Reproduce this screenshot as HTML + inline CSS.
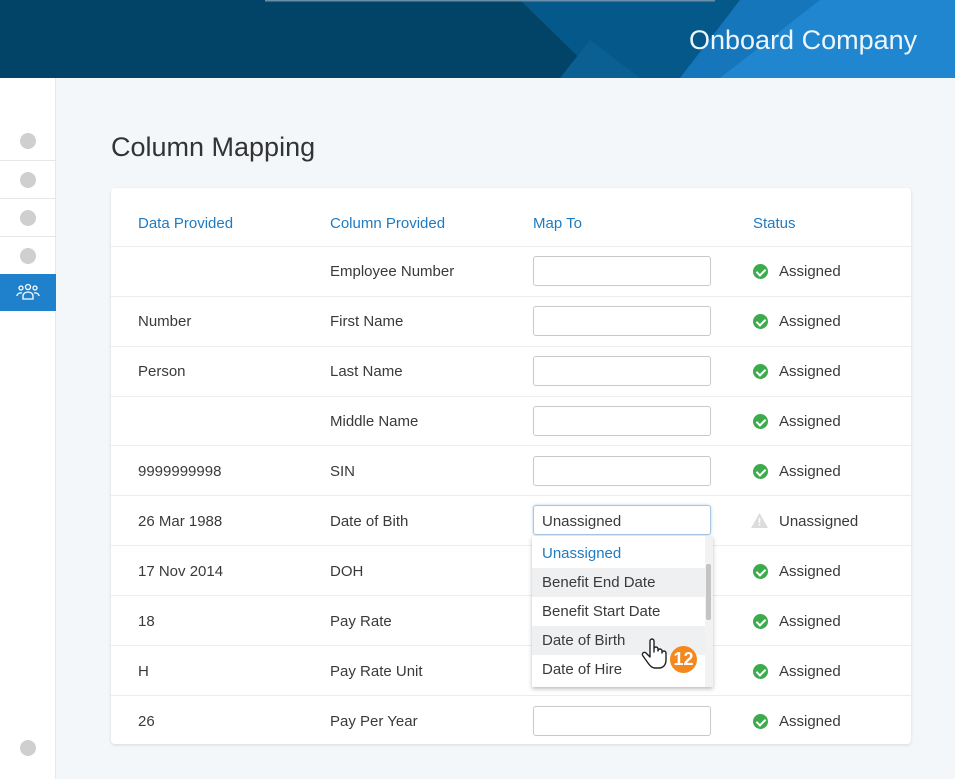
<!DOCTYPE html>
<html><head><style>
*{margin:0;padding:0;box-sizing:border-box}
body{width:955px;height:779px;overflow:hidden;background:#f4f7fa;font-family:"Liberation Sans",sans-serif;position:relative;color:#3a3a3a}
.hdr{position:absolute;left:0;top:0;width:955px;height:78px;background:#024468;overflow:hidden}
.side{position:absolute;left:0;top:78px;width:56px;height:701px;background:#fff;border-right:1px solid #e6e9ec}
.dot{position:absolute;left:20px;width:16px;height:16px;border-radius:50%;background:#cfcfcf}
.sl{position:absolute;left:0;width:56px;height:1px;background:#e6e6e6}
.card{position:absolute;left:111px;top:188px;width:800px;height:556px;background:#fff;border-radius:4px;box-shadow:0 1px 3px rgba(0,0,0,.12)}
.t{position:absolute;font-size:15px;white-space:nowrap}
.h{color:#1f7bc1}
.row{position:absolute;left:111px;width:800px;height:1px;background:#ececec}
.inp{position:absolute;left:533px;width:178px;height:30px;border:1px solid #c9c9c9;border-radius:3px;background:#fff}
.ok{position:absolute;left:753px;width:15px;height:15px;border-radius:50%;background:#3cab4c}
.ok:after{content:"";position:absolute;left:5px;top:3px;width:4px;height:7px;border:solid #fff;border-width:0 2px 2px 0;transform:rotate(45deg)}
.dd{position:absolute;left:532px;top:536px;width:181px;height:151px;background:#fff;box-shadow:0 2px 4px rgba(0,0,0,.25)}
.it{position:absolute;left:0;width:173px;height:29px;padding-left:10px;line-height:29px;font-size:15px}
</style></head><body>
<div class="hdr">
<svg width="955" height="78" style="position:absolute;left:0;top:0">
<polygon points="520,0 955,0 955,78 600,78" fill="#05598a"/>
<polygon points="740,0 955,0 955,78 680,78" fill="#1676bb"/>
<polygon points="820,0 955,0 955,78 720,78" fill="#1f86cf"/>
<polygon points="590,40 640,78 560,78" fill="#0a5f93"/>
<rect x="265" y="0" width="450" height="1.5" fill="#6a8ea8"/>
</svg>
<div class="t" style="left:689px;top:25px;font-size:27px;color:#eef5fb">Onboard Company</div>
</div>
<div class="side">
<div class="dot" style="top:55px"></div><div class="sl" style="top:82px"></div>
<div class="dot" style="top:94px"></div><div class="sl" style="top:120px"></div>
<div class="dot" style="top:132px"></div><div class="sl" style="top:158px"></div>
<div class="dot" style="top:170px"></div><div class="sl" style="top:196px"></div>
<div style="position:absolute;left:0;top:196px;width:56px;height:37px;background:#1f80cc">
<svg width="24" height="18" viewBox="0 0 24 18" style="position:absolute;left:16px;top:9px" fill="none" stroke="#fff" stroke-width="1.3"><circle cx="12" cy="4" r="2.5"/><circle cx="5" cy="5" r="2"/><circle cx="19" cy="5" r="2"/><path d="M7 16v-3a5 4 0 0 1 10 0v3zM1 13a4 3 0 0 1 5-3M23 13a4 3 0 0 0-5-3"/></svg></div>
<div class="dot" style="top:662px"></div>
</div>
<div class="t" style="left:111px;top:132px;font-size:27px;color:#333">Column Mapping</div>
<div class="card"></div>
<div class="t h" style="left:138px;top:215px">Data Provided</div>
<div class="t h" style="left:330px;top:215px">Column Provided</div>
<div class="t h" style="left:533px;top:215px">Map To</div>
<div class="t h" style="left:753px;top:215px">Status</div>
<div class="row" style="top:246px"></div><div class="row" style="top:296px"></div><div class="row" style="top:346px"></div><div class="row" style="top:396px"></div><div class="row" style="top:445px"></div><div class="row" style="top:495px"></div><div class="row" style="top:545px"></div><div class="row" style="top:595px"></div><div class="row" style="top:645px"></div><div class="row" style="top:695px"></div>

<div class="t" style="left:330px;top:263px">Employee Number</div><div class="inp" style="top:256px"></div><div class="ok" style="top:264px"></div><div class="t" style="left:779px;top:263px">Assigned</div>
<div class="t" style="left:138px;top:313px">Number</div><div class="t" style="left:330px;top:313px">First Name</div><div class="inp" style="top:306px"></div><div class="ok" style="top:314px"></div><div class="t" style="left:779px;top:313px">Assigned</div>
<div class="t" style="left:138px;top:363px">Person</div><div class="t" style="left:330px;top:363px">Last Name</div><div class="inp" style="top:356px"></div><div class="ok" style="top:364px"></div><div class="t" style="left:779px;top:363px">Assigned</div>
<div class="t" style="left:330px;top:413px">Middle Name</div><div class="inp" style="top:406px"></div><div class="ok" style="top:414px"></div><div class="t" style="left:779px;top:413px">Assigned</div>
<div class="t" style="left:138px;top:463px">9999999998</div><div class="t" style="left:330px;top:463px">SIN</div><div class="inp" style="top:456px"></div><div class="ok" style="top:464px"></div><div class="t" style="left:779px;top:463px">Assigned</div>
<div class="t" style="left:138px;top:513px">26 Mar 1988</div><div class="t" style="left:330px;top:513px">Date of Bith</div><div class="inp" style="top:505px;border-color:#a9c6e0;box-shadow:0 0 3px #b8d4ee"></div><div class="t" style="left:542px;top:513px">Unassigned</div>
<svg width="17" height="15" style="position:absolute;left:751px;top:513px"><polygon points="8.5,0 17,15 0,15" fill="#dcdcdc"/><rect x="7.7" y="5" width="1.6" height="5" fill="#fff"/><rect x="7.7" y="11" width="1.6" height="1.6" fill="#fff"/></svg>
<div class="t" style="left:779px;top:513px">Unassigned</div>
<div class="t" style="left:138px;top:563px">17 Nov 2014</div><div class="t" style="left:330px;top:563px">DOH</div><div class="ok" style="top:564px"></div><div class="t" style="left:779px;top:563px">Assigned</div>
<div class="t" style="left:138px;top:613px">18</div><div class="t" style="left:330px;top:613px">Pay Rate</div><div class="ok" style="top:614px"></div><div class="t" style="left:779px;top:613px">Assigned</div>
<div class="t" style="left:138px;top:663px">H</div><div class="t" style="left:330px;top:663px">Pay Rate Unit</div><div class="ok" style="top:664px"></div><div class="t" style="left:779px;top:663px">Assigned</div>
<div class="t" style="left:138px;top:713px">26</div><div class="t" style="left:330px;top:713px">Pay Per Year</div><div class="inp" style="top:706px"></div><div class="ok" style="top:714px"></div><div class="t" style="left:779px;top:713px">Assigned</div>

<div class="dd">
<div class="it" style="top:3px;color:#1f7bc1">Unassigned</div>
<div class="it" style="top:32px;background:#eef0f2">Benefit End Date</div>
<div class="it" style="top:61px">Benefit Start Date</div>
<div class="it" style="top:90px;background:#eef0f2">Date of Birth</div>
<div class="it" style="top:119px">Date of Hire</div>
<div style="position:absolute;left:173px;top:0;width:8px;height:151px;background:#f2f2f2"></div>
<div style="position:absolute;left:174px;top:28px;width:5px;height:56px;background:#c4c4c4;border-radius:2px"></div>
</div>
<svg width="30" height="34" viewBox="0 0 30 34" style="position:absolute;left:640px;top:638px" fill="#fff" stroke="#222" stroke-width="1.4" stroke-linejoin="round"><path d="M10 3a2 2 0 0 1 4 0v11l0-3a2 2 0 0 1 4 0v2a2 2 0 0 1 4 0v2a2 2 0 0 1 4 0v7c0 5-3 8-7 8h-4c-3 0-5-2-7-5l-5-7a2 2 0 0 1 3-3l4 4z"/></svg>
<div style="position:absolute;left:670px;top:646px;width:27px;height:27px;border-radius:50%;background:#f5871f;color:#fff;font-weight:bold;font-size:18px;line-height:27px;text-align:center">12</div>
</body></html>
